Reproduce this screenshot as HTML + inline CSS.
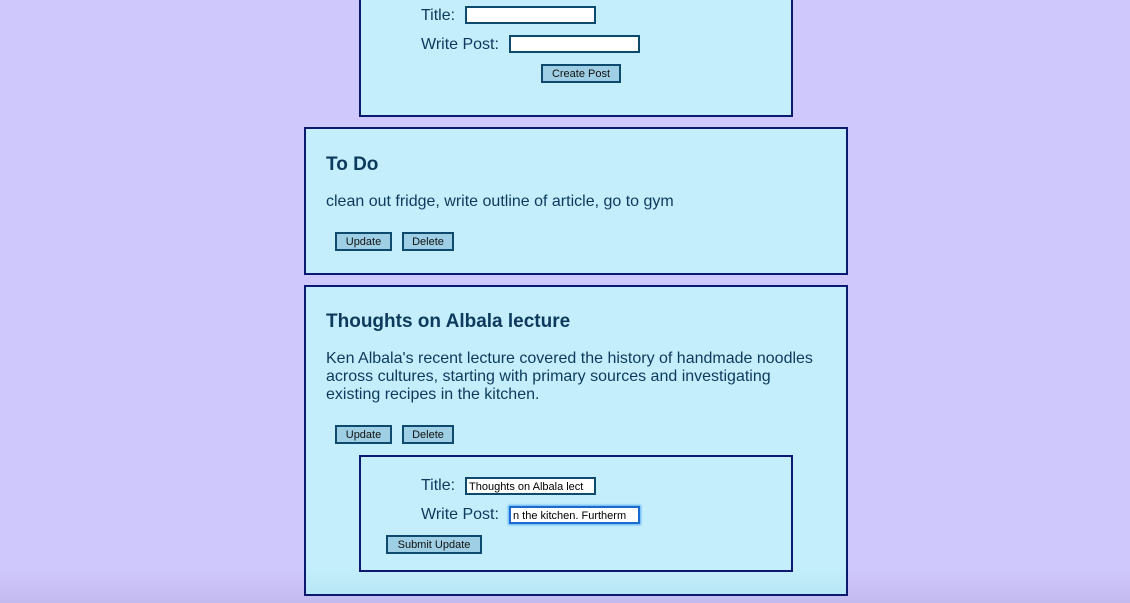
<!DOCTYPE html>
<html><head><style>
*{margin:0;padding:0;box-sizing:border-box}
html,body{width:1130px;height:603px;overflow:hidden}
body{background:linear-gradient(#cfc8fd 0,#cfc8fd 570px,#c3baf0 603px);font-family:"Liberation Sans",Arial,sans-serif;color:#0d3a5c;position:relative}
.box{position:absolute;background:#c4eefc;border:2px solid #0b1a6e}
.a{position:absolute;white-space:nowrap}
.lbl{font-size:16px;line-height:18px}
.inp{position:absolute;height:18px;width:131px;background:#fff;border:2px solid #0d4a6e;font-size:11px;line-height:16px;padding-left:2px;color:#000;overflow:hidden;white-space:nowrap}
.btn{position:absolute;height:19px;background:#9fcfe4;border:2px solid #0d4a6e;font-size:11px;line-height:17px;text-align:center;color:#111}
h2{position:absolute;font-size:19px;font-weight:bold;white-space:nowrap}
.p{font-size:16px;line-height:18px}
</style></head><body>
<div class="box" style="left:359px;top:-10px;width:434px;height:127px"></div>
<div class="a lbl" style="left:421px;top:7px">Title:</div>
<div class="inp" style="left:465px;top:6px"></div>
<div class="a lbl" style="left:421px;top:36px">Write Post:</div>
<div class="inp" style="left:509px;top:35px"></div>
<div class="btn" style="left:541px;top:64px;width:80px">Create Post</div>

<div class="box" style="left:304px;top:127px;width:544px;height:148px"></div>
<h2 style="left:326px;top:154px">To Do</h2>
<div class="a p" style="left:326px;top:193px">clean out fridge, write outline of article, go to gym</div>
<div class="btn" style="left:335px;top:232px;width:57px">Update</div>
<div class="btn" style="left:402px;top:232px;width:52px">Delete</div>

<div class="box" style="left:304px;top:285px;width:544px;height:311px;background:linear-gradient(#c4eefc 0,#c4eefc 280px,#b8e6f5 309px)"></div>
<h2 style="left:326px;top:311px">Thoughts on Albala lecture</h2>
<div class="a p" style="left:326px;top:350px">Ken Albala's recent lecture covered the history of handmade noodles<br>across cultures, starting with primary sources and investigating<br>existing recipes in the kitchen.</div>
<div class="btn" style="left:335px;top:425px;width:57px">Update</div>
<div class="btn" style="left:402px;top:425px;width:52px">Delete</div>

<div class="box" style="left:359px;top:455px;width:434px;height:117px"></div>
<div class="a lbl" style="left:421px;top:477px">Title:</div>
<div class="inp" style="left:465px;top:477px">Thoughts on Albala lect</div>
<div class="a lbl" style="left:421px;top:506px">Write Post:</div>
<div class="inp" style="left:509px;top:506px;border-color:#1a6ad0;box-shadow:0 0 2px 1px #5fb0f5">n the kitchen. Furtherm</div>
<div class="btn" style="left:386px;top:535px;width:96px">Submit Update</div>
</body></html>
